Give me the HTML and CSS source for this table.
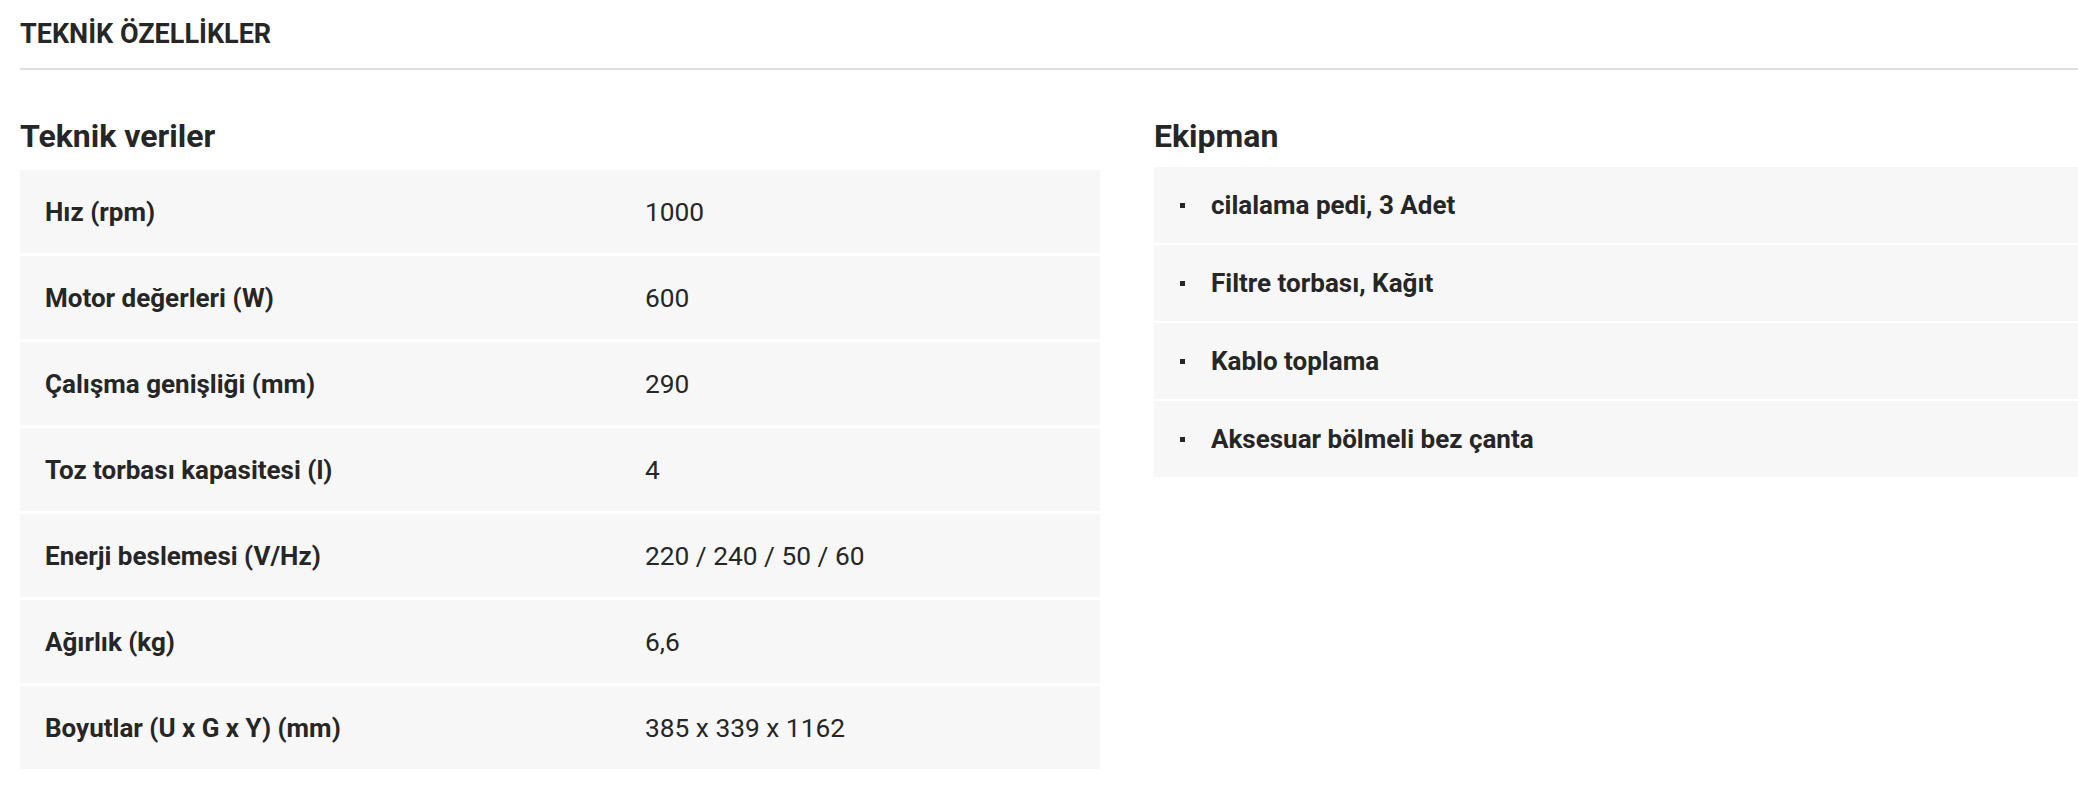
FILE: index.html
```html
<!DOCTYPE html>
<html lang="tr">
<head>
<meta charset="utf-8">
<title>Teknik Özellikler</title>
<link rel="stylesheet" href="styles.css">
</head>
<body>
<div class="page">
  <h2 class="section-title">TEKNİK ÖZELLİKLER</h2>
  <div class="columns">
    <section class="col">
      <h3 class="col-title">Teknik veriler</h3>
      <div class="spec-table">
        <div class="spec-row"><div class="spec-label">Hız (rpm)</div><div class="spec-value">1000</div></div>
        <div class="spec-row"><div class="spec-label">Motor değerleri (W)</div><div class="spec-value">600</div></div>
        <div class="spec-row"><div class="spec-label">Çalışma genişliği (mm)</div><div class="spec-value">290</div></div>
        <div class="spec-row"><div class="spec-label">Toz torbası kapasitesi (l)</div><div class="spec-value">4</div></div>
        <div class="spec-row"><div class="spec-label">Enerji beslemesi (V/Hz)</div><div class="spec-value">220 / 240 / 50 / 60</div></div>
        <div class="spec-row"><div class="spec-label">Ağırlık (kg)</div><div class="spec-value">6,6</div></div>
        <div class="spec-row"><div class="spec-label">Boyutlar (U x G x Y) (mm)</div><div class="spec-value">385 x 339 x 1162</div></div>
      </div>
    </section>
    <section class="col">
      <h3 class="col-title">Ekipman</h3>
      <ul class="equip-list">
        <li class="equip-item">cilalama pedi, 3 Adet</li>
        <li class="equip-item">Filtre torbası, Kağıt</li>
        <li class="equip-item">Kablo toplama</li>
        <li class="equip-item">Aksesuar bölmeli bez çanta</li>
      </ul>
    </section>
  </div>
</div>
</body>
</html>
```

FILE: styles.css
```css
html, body {
  margin: 0;
  padding: 0;
  background: #ffffff;
}

body {
  font-family: Roboto, "Liberation Sans", sans-serif;
  color: #262626;
}

.page {
  padding-left: 20px;
}

.section-title {
  margin: 0;
  padding-top: 18px;
  padding-bottom: 18px;
  font-size: 27px;
  line-height: 32px;
  font-weight: 700;
  border-bottom: 2px solid #e0e0e0;
}

.columns {
  display: grid;
  grid-template-columns: 1080px 1fr;
  column-gap: 54px;
  margin-top: 48px;
}

.col-title {
  margin: 0 0 16px 0;
  font-size: 32px;
  line-height: 36px;
  font-weight: 700;
}

.spec-table {
  display: flex;
  flex-direction: column;
  gap: 3px;
}

.spec-row {
  display: grid;
  grid-template-columns: 600px 1fr;
  align-items: center;
  height: 83px;
  padding: 0 25px;
  background: #f7f7f7;
  font-size: 26px;
  line-height: 30px;
}

.spec-label {
  font-weight: 700;
}

.spec-value {
  font-weight: 400;
  font-size: 26.3px;
}

.equip-list {
  list-style: none;
  margin: -3px 0 0 0;
  padding: 0;
  display: flex;
  flex-direction: column;
  gap: 2px;
}

.equip-item {
  display: flex;
  align-items: center;
  gap: 26px;
  height: 76px;
  padding-left: 26px;
  background: #f7f7f7;
  font-size: 26px;
  line-height: 30px;
  font-weight: 700;
}

.equip-item::before {
  content: "";
  width: 5px;
  height: 5px;
  background: #262626;
  flex: none;
}
```
